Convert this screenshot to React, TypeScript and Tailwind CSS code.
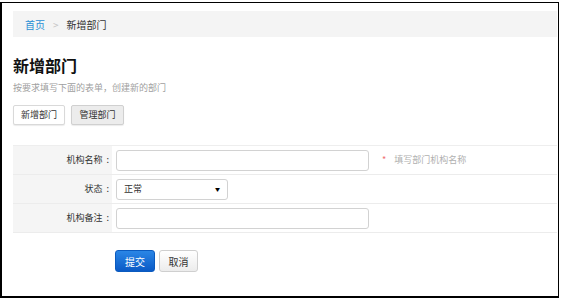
const cjk = "font-['Microsoft_YaHei','Noto_Sans_CJK_SC',sans-serif]";

const rows = [
  { label: "机构名称", kind: "input", hint: "填写部门机构名称" },
  { label: "状态", kind: "select" },
  { label: "机构备注", kind: "input" },
] as const;

export default function App() {
  return (
    <div className={`h-[299px] w-[561px] bg-white pt-[2px] ${cjk}`}>
      <div className="h-[296px] w-[559px] border-t border-r border-b-2 border-l-2 border-black pt-2 pr-[1px] pl-[11px]">
        <nav className="flex h-[26px] items-center gap-[8px] bg-[#f4f4f4] pl-3 text-[10px]">
          <span className="text-[#2a8fd4]">首页</span>
          <span className="text-[#c4c4c4]">&gt;</span>
          <span className="text-[#333]">新增部门</span>
        </nav>

        <h1 className="mt-[18px] text-[16px] leading-[20px] font-bold text-[#111]">新增部门</h1>
        <p className="mt-[7px] text-[9px] leading-[12px] text-[#a0a0a0]">按要求填写下面的表单，创建新的部门</p>

        <div className="mt-[11px] flex gap-[6px] text-[9px] text-[#333]">
          <button className="h-[20px] w-[52px] rounded-[2px] border border-[#d9d9d9] bg-white shadow-[0_1px_1px_rgba(0,0,0,0.08)]">
            新增部门
          </button>
          <button className="h-[20px] w-[53px] rounded-[2px] border border-[#d0d0d0] bg-[#ececec] shadow-[0_1px_1px_rgba(0,0,0,0.08)]">
            管理部门
          </button>
        </div>

        <div className="mt-5 border-t border-[#eeeeee] text-[9px]">
          {rows.map((row) => (
            <div key={row.label} className="flex h-[29px] border-b border-[#ececec]">
              <div className="flex w-[99px] items-center justify-end bg-[#f5f5f5] pr-[3px] text-[#333]">
                {row.label}
                <span className="ml-[4px]">:</span>
              </div>
              <div className="flex flex-1 items-center pl-[4px]">
                {row.kind === "input" ? (
                  <div className="h-[21px] w-[253px] rounded-[3px] border border-[#d2d2d2] bg-white" />
                ) : (
                  <div className="flex h-[21px] w-[112px] items-center justify-between rounded-[3px] border border-[#d2d2d2] bg-white pr-[7px] pl-[7px] text-[#333]">
                    <span>正常</span>
                    <span className="text-[5px] text-black">▼</span>
                  </div>
                )}
                {"hint" in row && (
                  <div className="ml-[13px] flex items-center gap-[8px]">
                    <span className="text-[9px] text-[#f07070]">*</span>
                    <span className="text-[#b0b0b0]">{row.hint}</span>
                  </div>
                )}
              </div>
            </div>
          ))}
        </div>

        <div className="mt-[17px] flex gap-[4px] pl-[102px] text-[10px]">
          <button className="h-[22px] w-[40px] rounded-[3px] border border-[#0b5bbf] bg-gradient-to-b from-[#2a86e6] to-[#0a5ac6] text-white">
            提交
          </button>
          <button className="h-[22px] w-[39px] rounded-[3px] border border-[#cfcfcf] bg-gradient-to-b from-white to-[#ececec] text-[#333]">
            取消
          </button>
        </div>
      </div>
    </div>
  );
}
